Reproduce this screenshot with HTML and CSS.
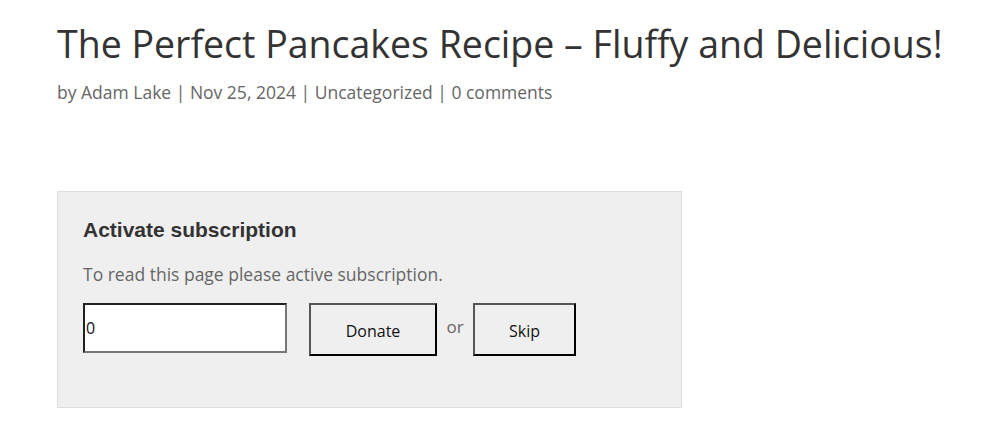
FILE: index.html
```html
<!DOCTYPE html>
<html lang="en">
<head>
  <meta charset="UTF-8">
  <title>The Perfect Pancakes Recipe</title>
  <link rel="stylesheet" href="styles.css">
</head>
<body>
  <div class="post">
    <h1 class="post-title">The Perfect Pancakes Recipe – Fluffy and Delicious!</h1>
    <p class="post-meta">by <a href="#">Adam Lake</a> | <span>Nov 25, 2024</span> | <a href="#">Uncategorized</a> | <a href="#">0 comments</a></p>

    <div class="paywall">
      <h3 class="paywall-title">Activate subscription</h3>
      <p class="paywall-text">To read this page please active subscription.</p>
      <form class="paywall-form">
        <input type="text" class="amount-input" value="0">
        <button type="button" class="pay-btn donate-btn">Donate</button>
        <span class="or">or</span>
        <button type="button" class="pay-btn skip-btn">Skip</button>
      </form>
    </div>
  </div>
</body>
</html>
```

FILE: styles.css
```css
* {
  margin: 0;
  padding: 0;
  box-sizing: border-box;
}

body {
  background-color: #fff;
  font-family: 'Open Sans', sans-serif;
  color: #666;
}

.post {
  padding: 21px 0 0 57px;
}

.post-title {
  font-size: 37.5px;
  font-weight: 400;
  line-height: 1.2;
  color: #333;
}

.post-meta {
  margin-top: 14px;
  font-size: 17.5px;
  color: #666;
}

.post-meta a {
  color: #666;
  text-decoration: none;
}

.paywall {
  margin-top: 87px;
  width: 625px;
  height: 217px;
  background-color: #efefef;
  border: 1px solid #ddd;
  padding: 26px 25px;
}

.paywall-title {
  font-family: 'Liberation Sans', Arial, sans-serif;
  font-size: 21px;
  font-weight: 700;
  color: #333;
}

.paywall-text {
  margin-top: 20px;
  font-size: 17.5px;
  color: #666;
}

.paywall-form {
  display: flex;
  align-items: flex-start;
  margin-top: 17px;
}

.amount-input {
  width: 204px;
  height: 50px;
  border: 2px inset #767676;
  background: #fff;
  font-family: 'Open Sans', sans-serif;
  font-size: 16px;
  color: #111;
  padding: 0 1px;
}

.pay-btn {
  height: 53px;
  border: 2px outset #767676;
  border-color: #555 #000 #000 #555;
  background-color: #efefef;
  font-family: 'Open Sans', sans-serif;
  font-size: 16px;
  color: #111;
  padding-top: 2px;
}

.donate-btn {
  width: 128px;
  margin-left: 22px;
}

.skip-btn {
  width: 103px;
}

.or {
  width: 36px;
  text-align: center;
  padding-top: 12px;
  font-size: 17px;
  color: #666;
}
```
